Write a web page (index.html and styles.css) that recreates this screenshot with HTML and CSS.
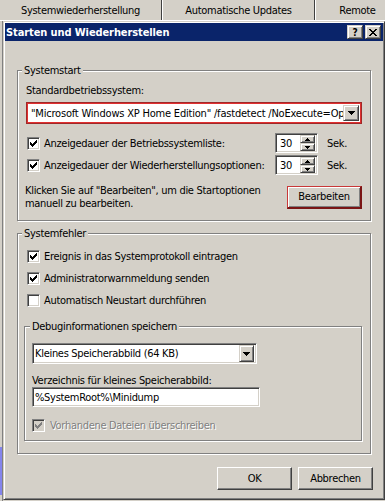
FILE: index.html
```html
<!DOCTYPE html>
<html lang="de">

<head>
    <meta charset="UTF-8">
    <meta name="viewport" content="width=device-width, initial-scale=1.0">
    <link rel="stylesheet" href="styles.css">
    <title>Starten und Wiederherstellen</title>
</head>

<body>
    <div class="tabs">
        <div class="tab tab1">Systemwiederherstellung</div>
        <div class="tab tab2">Automatische Updates</div>
        <div class="tab tab3">Remote</div>
    </div>
    <div class="desk">
        <div class="edge"><span class="edgePatch"></span></div>
        <div class="dialog">
            <div class="titlebar">
                <span class="title">Starten und Wiederherstellen</span>
                <span class="capBtns">
                    <span class="capBtn raised">?</span>
                    <span class="capBtn raised">
                        <svg width="8" height="7" viewBox="0 0 8 7"><path d="M0 0h2v1H0zM6 0h2v1H6zM1 1h2v1H1zM5 1h2v1H5zM2 2h4v1H2zM3 3h2v1H3zM2 4h4v1H2zM1 5h2v1H1zM5 5h2v1H5zM0 6h2v1H0zM6 6h2v1H6z"/></svg>
                    </span>
                </span>
            </div>
            <div class="dialogBody">
                <!-- Systemstart -->
                <fieldset class="group startGroup">
                    <legend>Systemstart</legend>
                    <div class="label osLabel">Standardbetriebssystem:</div>
                    <div class="combo comboFocus">
                        <span class="comboText">"Microsoft Windows XP Home Edition" /fastdetect /NoExecute=OptIn</span>
                        <span class="dropBtn raised">
                            <svg width="7" height="4" viewBox="0 0 7 4"><path d="M0 0h7v1H0zM1 1h5v1H1zM2 2h3v1H2zM3 3h1v1H3z"/></svg>
                        </span>
                    </div>
                    <div class="timeRow firstTime">
                        <div class="checkLine">
                            <span class="check">
                                <svg width="7" height="7" viewBox="0 0 7 7"><path d="M0 2h1v3H0zM1 3h1v3H1zM2 4h1v3H2zM3 3h1v3H3zM4 2h1v3H4zM5 1h1v3H5zM6 0h1v3H6z"/></svg>
                            </span>
                            <span>Anzeigedauer der Betriebssystemliste:</span>
                        </div>
                        <div class="spin">
                            <span class="spinText">30</span>
                            <span class="spinBtns">
                                <span class="spinBtn raised"><svg width="5" height="3" viewBox="0 0 5 3"><path d="M2 0h1v1H2zM1 1h3v1H1zM0 2h5v1H0z"/></svg></span>
                                <span class="spinBtn raised"><svg width="5" height="3" viewBox="0 0 5 3"><path d="M0 0h5v1H0zM1 1h3v1H1zM2 2h1v1H2z"/></svg></span>
                            </span>
                        </div>
                        <span class="unit">Sek.</span>
                    </div>
                    <div class="timeRow">
                        <div class="checkLine">
                            <span class="check">
                                <svg width="7" height="7" viewBox="0 0 7 7"><path d="M0 2h1v3H0zM1 3h1v3H1zM2 4h1v3H2zM3 3h1v3H3zM4 2h1v3H4zM5 1h1v3H5zM6 0h1v3H6z"/></svg>
                            </span>
                            <span>Anzeigedauer der Wiederherstellungsoptionen:</span>
                        </div>
                        <div class="spin">
                            <span class="spinText">30</span>
                            <span class="spinBtns">
                                <span class="spinBtn raised"><svg width="5" height="3" viewBox="0 0 5 3"><path d="M2 0h1v1H2zM1 1h3v1H1zM0 2h5v1H0z"/></svg></span>
                                <span class="spinBtn raised"><svg width="5" height="3" viewBox="0 0 5 3"><path d="M0 0h5v1H0zM1 1h3v1H1zM2 2h1v1H2z"/></svg></span>
                            </span>
                        </div>
                        <span class="unit">Sek.</span>
                    </div>
                    <div class="editRow">
                        <p class="editHint">Klicken Sie auf "Bearbeiten", um die Startoptionen<br>manuell zu bearbeiten.</p>
                        <button class="btn btnFocus">Bearbeiten</button>
                    </div>
                </fieldset>

                <!-- Systemfehler -->
                <fieldset class="group errorGroup">
                    <legend>Systemfehler</legend>
                    <div class="checkLine errLine firstErr">
                        <span class="check">
                            <svg width="7" height="7" viewBox="0 0 7 7"><path d="M0 2h1v3H0zM1 3h1v3H1zM2 4h1v3H2zM3 3h1v3H3zM4 2h1v3H4zM5 1h1v3H5zM6 0h1v3H6z"/></svg>
                        </span>
                        <span>Ereignis in das Systemprotokoll eintragen</span>
                    </div>
                    <div class="checkLine errLine">
                        <span class="check">
                            <svg width="7" height="7" viewBox="0 0 7 7"><path d="M0 2h1v3H0zM1 3h1v3H1zM2 4h1v3H2zM3 3h1v3H3zM4 2h1v3H4zM5 1h1v3H5zM6 0h1v3H6z"/></svg>
                        </span>
                        <span>Administratorwarnmeldung senden</span>
                    </div>
                    <div class="checkLine errLine">
                        <span class="check"></span>
                        <span>Automatisch Neustart durchführen</span>
                    </div>

                    <fieldset class="group debugGroup">
                        <legend>Debuginformationen speichern</legend>
                        <div class="field select">
                            <span class="fieldText">Kleines Speicherabbild (64 KB)</span>
                            <span class="dropBtn raised">
                                <svg width="7" height="4" viewBox="0 0 7 4"><path d="M0 0h7v1H0zM1 1h5v1H1zM2 2h3v1H2zM3 3h1v1H3z"/></svg>
                            </span>
                        </div>
                        <div class="label dirLabel">Verzeichnis für kleines Speicherabbild:</div>
                        <div class="field dirInput">
                            <span class="fieldText">%SystemRoot%\Minidump</span>
                        </div>
                        <div class="checkLine disabledLine">
                            <span class="check checkDisabled">
                                <svg width="7" height="7" viewBox="0 0 7 7"><path d="M0 2h1v3H0zM1 3h1v3H1zM2 4h1v3H2zM3 3h1v3H3zM4 2h1v3H4zM5 1h1v3H5zM6 0h1v3H6z"/></svg>
                            </span>
                            <span class="disabledText">Vorhandene Dateien überschreiben</span>
                        </div>
                    </fieldset>
                </fieldset>

                <div class="actions">
                    <button class="btn">OK</button>
                    <button class="btn">Abbrechen</button>
                </div>
            </div>
        </div>
    </div>
</body>

</html>
```

FILE: styles.css
```css
* {
    box-sizing: border-box;
    margin: 0;
    padding: 0;
}

body {
    width: 385px;
    height: 501px;
    overflow: hidden;
    background: #d4d0c8;
    color: #000;
    font-family: "DejaVu Sans Condensed", "DejaVu Sans", sans-serif;
    font-stretch: condensed;
    font-size: 11px;
    line-height: 13px;
    letter-spacing: -0.3px;
}

/* tab strip of the parent dialog */
.tabs {
    display: flex;
    height: 21px;
    border-bottom: 1px solid #fff;
}

.tab {
    flex: none;
    padding-top: 4px;
    text-align: center;
    white-space: nowrap;
}

.tab1 {
    width: 162px;
    border-right: 1px solid #404040;
}

.tab2 {
    width: 153px;
    border-left: 1px solid #fff;
    border-right: 1px solid #404040;
}

.tab3 {
    width: 84px;
    border-left: 1px solid #fff;
}

.desk {
    display: flex;
    height: 480px;
}

.edge {
    flex: none;
    width: 3px;
    display: flex;
    flex-direction: column;
    justify-content: flex-end;
    padding-bottom: 6px;
    border-right: 1px solid #808080;
}

.edgePatch {
    width: 2px;
    height: 48px;
    background: #8484ec;
}

/* window */
.dialog {
    flex: none;
    width: 382px;
    height: 479px;
    padding: 1px;
    display: flex;
    flex-direction: column;
    border: 1px solid;
    border-color: #d4d0c8 #404040 #404040 #d4d0c8;
    box-shadow: inset 1px 1px #fff, inset -1px -1px #808080;
}

.raised {
    background: #d4d0c8;
    border: 1px solid;
    border-color: #d4d0c8 #404040 #404040 #d4d0c8;
    box-shadow: inset 1px 1px #fff, inset -1px -1px #808080;
}

.titlebar {
    height: 18px;
    flex: none;
    display: flex;
    align-items: center;
    justify-content: space-between;
    padding: 0 2px 0 1px;
    background: #0a246a;
    color: #fff;
    font-weight: bold;
    letter-spacing: -0.1px;
}

.capBtns {
    display: flex;
    gap: 2px;
}

.capBtn {
    width: 16px;
    height: 14px;
    display: flex;
    align-items: center;
    justify-content: center;
    color: #000;
    font-family: "DejaVu Sans", sans-serif;
    font-size: 10px;
    font-weight: bold;
}

.dialogBody {
    flex: 1;
    display: flex;
    flex-direction: column;
    padding: 23px 10px 0 12px;
}

/* group boxes */
.group {
    min-width: 0;
    margin-right: 2px;
    padding: 0 8px;
    border: 1px solid #808080;
    box-shadow: 1px 1px 0 #fff, inset 1px 1px 0 #fff;
}

.group legend {
    margin-left: -4px;
    padding: 0 2px;
    line-height: 13px;
    background: #d4d0c8;
}

.startGroup {
    padding-bottom: 10px;
}

.label {
    white-space: nowrap;
}

.osLabel {
    margin-top: 7px;
}

.combo {
    display: flex;
    align-items: center;
    height: 22px;
    margin-top: 5px;
    padding: 0 2px 0 4px;
    background: #fff;
}

.comboFocus {
    border: 1px solid #a02828;
    box-shadow: inset 0 0 0 1px #e03030;
}

.comboText,
.fieldText {
    flex: 1;
    overflow: hidden;
    white-space: nowrap;
}

.comboText {
    letter-spacing: -0.2px;
}

.dropBtn {
    flex: none;
    width: 16px;
    height: 16px;
    display: flex;
    align-items: center;
    justify-content: center;
}

.timeRow {
    display: grid;
    grid-template-columns: 249px 43px auto;
    align-items: center;
    height: 20px;
    margin-top: 2px;
}

.firstTime {
    margin-top: 9px;
}

.checkLine {
    display: flex;
    align-items: center;
    gap: 4px;
    padding-left: 1px;
    white-space: nowrap;
}

.check {
    flex: none;
    width: 13px;
    height: 13px;
    display: flex;
    align-items: center;
    justify-content: center;
    background: #fff;
    border: 1px solid;
    border-color: #808080 #fff #fff #808080;
    box-shadow: inset 1px 1px #404040, inset -1px -1px #d4d0c8;
}

.checkDisabled {
    background: #d4d0c8;
    fill: #808080;
}

.field,
.spin {
    display: flex;
    align-items: center;
    background: #fff;
    border: 1px solid;
    border-color: #808080 #fff #fff #808080;
    box-shadow: inset 1px 1px #404040, inset -1px -1px #d4d0c8;
    padding: 2px;
}

.spin {
    height: 20px;
    padding-left: 4px;
}

.spinText {
    flex: 1;
}

.spinBtns {
    display: flex;
    flex-direction: column;
    width: 15px;
    height: 16px;
}

.spinBtn {
    height: 8px;
    display: flex;
    align-items: center;
    justify-content: center;
}

.unit {
    margin-left: 9px;
}

.editRow {
    display: flex;
    align-items: center;
    justify-content: space-between;
    margin-top: 9px;
}

.editHint {
    margin-left: -1px;
}

.btn {
    width: 75px;
    height: 23px;
    font: inherit;
    letter-spacing: inherit;
    color: #000;
    background: #d4d0c8;
    border: 1px solid;
    border-color: #fff #404040 #404040 #fff;
    box-shadow: inset -1px -1px #808080;
}

.btnFocus {
    border-width: 1px 2px 2px 1px;
    border-color: #c83838 #7a1414 #7a1414 #c83838;
    box-shadow: inset 1px 1px #fff, inset -1px -1px #808080;
}

.errorGroup {
    margin-top: 6px;
    padding-bottom: 12px;
}

.errLine {
    height: 16px;
    margin-top: 6px;
}

.firstErr {
    margin-top: 8px;
}

.debugGroup {
    margin: 12px 0 0 -2px;
    padding: 0 7px 8px;
}

.debugGroup legend {
    margin-left: -2px;
}

.select {
    width: 225px;
    height: 21px;
    margin-top: 10px;
}

.select .dropBtn {
    width: 15px;
    height: 17px;
}

.dirLabel {
    margin-top: 10px;
}

.dirInput {
    width: 228px;
    height: 20px;
}

.disabledLine {
    margin-top: 12px;
    padding-left: 0;
    gap: 5px;
}

.disabledText {
    color: #808080;
    text-shadow: 1px 1px #fff;
}

.actions {
    display: flex;
    justify-content: flex-end;
    gap: 6px;
    margin-top: 13px;
}
```
